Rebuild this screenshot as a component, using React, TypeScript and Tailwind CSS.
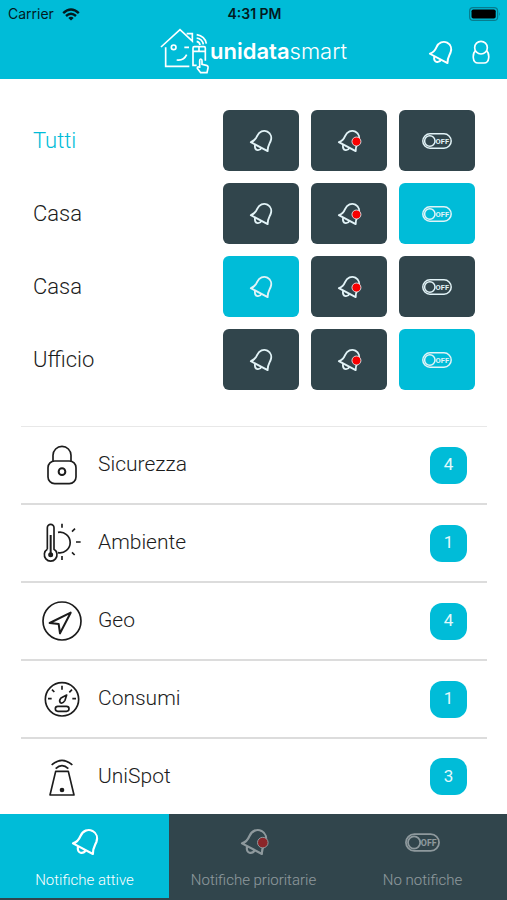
import React, { useState } from 'react';
import clsx from 'clsx';

type Mode = 'active' | 'priority' | 'off';

interface Place {
  id: number;
  name: string;
  mode: Mode | null;
}

interface Category {
  name: string;
  count: number;
  icon: React.ReactNode;
}

const BellIcon: React.FC<{ className?: string; dot?: boolean }> = ({ className, dot }) => (
  <svg viewBox="0 0 26 26" className={clsx('overflow-visible', className)} fill="none" stroke="currentColor" strokeWidth="2.2" strokeLinejoin="round" aria-hidden="true">
    <path d="M1 14.4C5 13.2 7 10.5 8.5 7C10.8 1.7 16 -.3 20.5 1.9C24.8 4.2 26 8.8 24.4 13C22.5 17.3 20.5 19.8 20.9 25Z" />
    <path d="M6 17.3C5.3 21 6.5 23.6 9 23.8C11.3 24 12.8 22.8 13.6 21.2" />
    {dot && <circle cx="21.8" cy="13.6" r="5.3" fill="#f80000" strokeWidth="1" />}
  </svg>
);

const OffIcon: React.FC<{ className?: string }> = ({ className }) => (
  <svg viewBox="0 0 30 16" className={className} fill="none" stroke="currentColor" strokeWidth="1.5" aria-hidden="true">
    <rect x=".8" y=".8" width="28.4" height="14.4" rx="7.2" />
    <circle cx="7.8" cy="8" r="5.2" />
    <text x="13.6" y="10.8" fill="currentColor" stroke="none" fontSize="7.5" className="font-[Roboto,sans-serif] font-bold">OFF</text>
  </svg>
);

const UserIcon = () => (
  <svg viewBox="0 0 52 72" className="h-6 w-[18px]" fill="none" stroke="currentColor" strokeWidth="5" aria-hidden="true">
    <circle cx="26" cy="23" r="19" />
    <path d="M10 32C3 37 2 44 3 54C4 64 8 69 17 69H35C44 69 48 64 49 54C50 44 49 37 42 32" />
  </svg>
);

const HouseLogo = () => (
  <svg viewBox="0 0 150 138" className="h-[46px] w-[50px]" fill="none" stroke="currentColor" strokeWidth="5" aria-hidden="true">
    <path d="M3 57L60 5L97 39V17H80" />
    <path d="M17 58V115H88" />
    <circle cx="41" cy="58" r="7" />
    <path d="M73 58H87M50 96C64 98 75 91 80 80" />
    <path d="M110 112H99V60Q99 56 103 56H132Q136 56 136 60V98M99 70H136M117 56V70" />
    <path d="M110 40Q119 42 120 51M110 30Q127 33 130 49M110 20Q135 24 139 47" />
    <path d="M119 120V98Q119 93 122 93Q126 93 126 98V109L139 112Q145 114 144 120L141 134H122L112 121Q111 114 119 118" />
  </svg>
);

const WifiIcon = () => (
  <svg viewBox="0 0 18 13" className="h-[13px] w-[18px]" fill="none" stroke="#031a1e" strokeWidth="2.4" aria-label="Wi-Fi">
    <path d="M1.2 5.2Q9 -2 16.8 5.2M4 8Q9 3.6 14 8" />
    <path d="M9 12.5L6.3 9.9Q9 7.7 11.7 9.9Z" fill="#031a1e" stroke="none" />
  </svg>
);

const BatteryIcon = () => (
  <svg viewBox="0 0 32 14" className="h-[14px] w-8" aria-label="Batteria">
    <rect x=".6" y=".6" width="28" height="12.8" rx="3.5" fill="none" stroke="#077c8e" strokeWidth="1.2" />
    <rect x="2.5" y="2.5" width="24.2" height="9" rx="1.8" fill="#000" />
    <path d="M30 5Q31.6 7 30 9Z" fill="#077c8e" />
  </svg>
);

const LineIcon: React.FC<{ children: React.ReactNode }> = ({ children }) => (
  <svg viewBox="0 0 120 120" className="size-10" fill="none" stroke="#1c1c1c" strokeWidth="5" strokeLinejoin="round" aria-hidden="true">
    {children}
  </svg>
);

const categories: Category[] = [
  {
    name: 'Sicurezza',
    count: 4,
    icon: (
      <LineIcon>
        <rect x="18" y="48" width="84" height="68" rx="20" />
        <path d="M33 48V31A27 27 0 0 1 87 31V48" />
        <circle cx="60" cy="80" r="10" strokeWidth="6" />
      </LineIcon>
    ),
  },
  {
    name: 'Ambiente',
    count: 1,
    icon: (
      <LineIcon>
        <path d="M16 79V14A10 10 0 0 1 36 14V79A19 19 0 1 1 16 79" />
        <path d="M26 36V95" strokeWidth="6" />
        <circle cx="26" cy="95" r="5" fill="#1c1c1c" />
        <path d="M48 28A31 31 0 1 1 48 89" />
        <path d="M60 2V14M90 26L99 17M102 57H116M90 88L98 96M60 99V111" />
      </LineIcon>
    ),
  },
  {
    name: 'Geo',
    count: 4,
    icon: (
      <LineIcon>
        <circle cx="60" cy="60" r="57" />
        <path d="M86 35L54 97L50 69L23 66Z" strokeWidth="6" />
      </LineIcon>
    ),
  },
  {
    name: 'Consumi',
    count: 1,
    icon: (
      <LineIcon>
        <circle cx="60" cy="61" r="50" />
        <path d="M60 20V32M18 59H29M91 59H102M30 32L37 39M90 32L82 40" />
        <path d="M74 48L69 64Q62 75 55 71Q50 65 57 57Z" />
        <rect x="40" y="82" width="41" height="15" rx="7.5" />
      </LineIcon>
    ),
  },
  {
    name: 'UniSpot',
    count: 3,
    icon: (
      <LineIcon>
        <path d="M29 24Q60 -4 91 24M41 35Q60 17 79 35" />
        <path d="M41 43H79L96 114H24Z" />
        <circle cx="60" cy="99" r="7" fill="#1c1c1c" stroke="none" />
      </LineIcon>
    ),
  },
];

const initialPlaces: Place[] = [
  { id: 0, name: 'Tutti', mode: null },
  { id: 1, name: 'Casa', mode: 'off' },
  { id: 2, name: 'Casa', mode: 'active' },
  { id: 3, name: 'Ufficio', mode: 'off' },
];

const modes: { id: Mode; label: string }[] = [
  { id: 'active', label: 'Notifiche attive' },
  { id: 'priority', label: 'Notifiche prioritarie' },
  { id: 'off', label: 'No notifiche' },
];

export default function App() {
  const [places, setPlaces] = useState<Place[]>(initialPlaces);
  const [tab, setTab] = useState<Mode>('active');

  // "Tutti" (id 0) applies the mode to every place
  const selectMode = (id: number, mode: Mode) => {
    setPlaces((prev) => prev.map((p) => (p.id !== 0 && (id === 0 || p.id === id) ? { ...p, mode } : p)));
  };

  return (
    <div className="flex min-h-screen flex-col bg-white font-[Roboto,sans-serif] font-light text-[#1c1c1c]">
      <header className="bg-[#00bcd8] font-[Inter,sans-serif] text-white">
        <div className="grid h-7 grid-cols-3 items-center pr-1.5 pl-2 text-[#031a1e]">
          <div className="flex items-center gap-2 text-sm font-normal">
            Carrier <WifiIcon />
          </div>
          <span className="text-center text-sm font-semibold">4:31 PM</span>
          <div className="flex justify-end"><BatteryIcon /></div>
        </div>
        <div className="flex h-[51px] items-start px-[17px]">
          <div className="flex-1" />
          <div className="flex items-center">
            <HouseLogo />
            <span className="text-[22px] font-light"><b className="font-semibold">unidata</b>smart</span>
          </div>
          <div className="flex flex-1 justify-end gap-5 pt-3">
            <button aria-label="Notifiche"><BellIcon className="size-[23px]" /></button>
            <button aria-label="Profilo"><UserIcon /></button>
          </div>
        </div>
      </header>

      <main className="flex-1">
        <div className="flex flex-col gap-3 pt-[31px] pr-8 pb-9 pl-[33px]">
          {places.map((place) => (
            <div key={place.id} className="flex items-center justify-between">
              <span className={clsx('text-[22px]', place.id === 0 && 'text-[#00bcd8]')}>{place.name}</span>
              <div className="flex gap-3">
                {modes.map(({ id, label }) => (
                  <button
                    key={id}
                    aria-label={label}
                    onClick={() => selectMode(place.id, id)}
                    className={clsx(
                      'flex h-[61px] w-[76px] items-center justify-center rounded-md text-[#e2f3f7]',
                      place.mode === id ? 'bg-[#00bcd8]' : 'bg-[#31454c]'
                    )}
                  >
                    {id === 'off' ? <OffIcon className="h-4 w-[30px]" /> : <BellIcon className="size-[22px]" dot={id === 'priority'} />}
                  </button>
                ))}
              </div>
            </div>
          ))}
        </div>

        <ul className="mr-5 ml-[21px] border-t border-[#e8e8e8]">
          {categories.map((category, i) => (
            <li key={category.name} className={clsx(i > 0 && 'border-t-2 border-[#dcdcdc]')}>
              <a href="#" className={clsx('flex items-center pr-5 pl-[21px]', i < categories.length - 1 ? 'h-[76px]' : 'h-[75px]')}>
                {category.icon}
                <span className="ml-4 flex-1 text-[21px]">{category.name}</span>
                <span className="flex size-[37px] items-center justify-center rounded-xl bg-[#00bcd8] text-[17px] font-normal text-[#e2f9fc]">
                  {category.count}
                </span>
              </a>
            </li>
          ))}
        </ul>
      </main>

      <nav className="grid grid-cols-3 border-b-2 border-[#31454c] bg-[#31454c]">
        {modes.map(({ id, label }) => (
          <button
            key={id}
            onClick={() => setTab(id)}
            className={clsx('flex h-[84px] flex-col items-center pt-3 text-white', tab === id && 'bg-[#00bcd8]')}
          >
            <span className={clsx('flex flex-col items-center gap-3', tab !== id && 'opacity-45')}>
              <span className="flex h-8 items-center">
                {id === 'off' ? <OffIcon className="h-[19px] w-[35px]" /> : <BellIcon className="size-[26px]" dot={id === 'priority'} />}
              </span>
              <span className="text-[15px] leading-5">{label}</span>
            </span>
          </button>
        ))}
      </nav>
    </div>
  );
}
